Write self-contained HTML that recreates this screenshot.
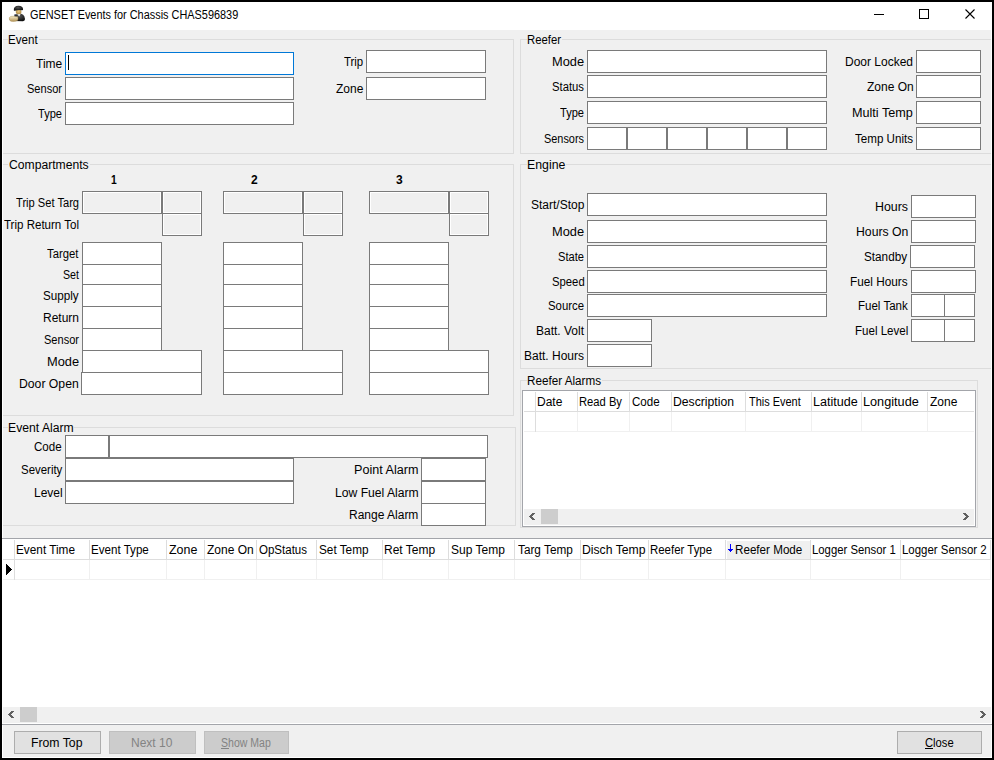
<!DOCTYPE html>
<html><head><meta charset="utf-8"><title>GENSET Events</title><style>
html,body{margin:0;padding:0;width:994px;height:760px;overflow:hidden;background:#000;}
body{position:relative;font-family:"Liberation Sans",sans-serif;font-size:12px;color:#000;}
.r,.tb,.gb,.t,.grid,.btn{position:absolute;box-sizing:border-box;}
.tb{background:#fff;border:1px solid #7a7a7a;}
.tb.focus{border-color:#0078d7;}
.tb.dis{background:#f0f0f0;box-shadow:inset 0 0 0 1px #fff;}
.gb{border:1px solid #dcdcdc;}
.t{line-height:14px;white-space:pre;transform-origin:0 0;}
.grid{background:#fff;border:1px solid #a3a5aa;}
.btn{background:#e1e1e1;border:1px solid #adadad;}
.btn.dis{background:#cccccc;border-color:#bfbfbf;}
</style></head><body>
<div class="r" style="left:0px;top:0px;width:994px;height:760px;background:#000"></div>
<div class="r" style="left:2px;top:2px;width:990px;height:756px;background:#fff"></div>
<div class="r" style="left:3px;top:30px;width:988px;height:727px;background:#f0f0f0"></div>
<svg class="r" style="left:5px;top:3px" width="25" height="22" viewBox="5 3 25 22">
<defs><radialGradient id="bd" cx="0.45" cy="0.3" r="0.7"><stop offset="0" stop-color="#5a5a5a"/><stop offset="1" stop-color="#0e0e0e"/></radialGradient>
<radialGradient id="ht" cx="0.45" cy="0.35" r="0.6"><stop offset="0" stop-color="#555"/><stop offset="1" stop-color="#111"/></radialGradient>
<linearGradient id="tan" x1="0" y1="0" x2="0" y2="1"><stop offset="0" stop-color="#f6ebc8"/><stop offset="1" stop-color="#b39458"/></linearGradient>
<radialGradient id="fc" cx="0.5" cy="0.4" r="0.6"><stop offset="0" stop-color="#e9c77c"/><stop offset="1" stop-color="#a8833e"/></radialGradient></defs>
<path d="M14.2 21 Q14 14.5 18.5 13.6 Q24.5 13.6 25 19 Q25 21 23 21.2 Z" fill="url(#bd)"/>
<ellipse cx="18.6" cy="11.8" rx="2.8" ry="2.6" fill="url(#fc)"/>
<path d="M13.8 10.2 Q13.5 6 18.5 5.8 Q23 5.8 23.1 9.5 Q23 10.6 21.5 10.2 Q18 9.6 15 10.8 Q13.9 11 13.8 10.2 Z" fill="url(#ht)"/>
<path d="M17.2 14.2 L19.2 16.6 L20.6 14 Z" fill="#f4f4f4"/>
<path d="M14.3 14.6 Q16 13.8 17.3 15.2 L16.5 17.2 L14.4 17 Z" fill="#2a2f3a"/>
<path d="M9.3 17.6 Q10 16 14 16.2 L17.8 16.8 Q18.3 19 17.6 20.6 Q15 21.8 11 21.3 Q9 20.8 9.3 17.6 Z" fill="url(#tan)" stroke="#a08040" stroke-width="0.4"/>
</svg>
<div class="t" style="left:30.00px;top:8px;transform:scaleX(0.9083);">GENSET Events for Chassis CHAS596839</div>
<div class="r" style="left:874px;top:14px;width:10px;height:1px;background:#000"></div>
<div class="r" style="left:919px;top:9px;width:10px;height:10px;border:1px solid #000"></div>
<svg class="r" style="left:965px;top:9px" width="10" height="10" viewBox="0 0 10 10"><path d="M0.5 0.5 L9.5 9.5 M9.5 0.5 L0.5 9.5" stroke="#000" stroke-width="1.1"/></svg>
<div class="r" style="left:3px;top:30px;width:988px;height:727px;overflow:hidden"><div class="r" style="left:-3px;top:-30px;width:994px;height:760px">
<div class="gb" style="left:2px;top:39px;width:512px;height:115px"></div>
<div class="r" style="left:8px;top:39px;width:31px;height:1px;background:#f0f0f0"></div>
<div class="t" style="left:8.03px;top:33px;transform:scaleX(0.9667);">Event</div>
<div class="gb" style="left:520px;top:39px;width:481px;height:115px"></div>
<div class="r" style="left:527px;top:39px;width:35px;height:1px;background:#f0f0f0"></div>
<div class="t" style="left:527.06px;top:33px;transform:scaleX(0.9429);">Reefer</div>
<div class="gb" style="left:2px;top:164px;width:512px;height:252px"></div>
<div class="r" style="left:8px;top:164px;width:82px;height:1px;background:#f0f0f0"></div>
<div class="t" style="left:9.00px;top:158px;transform:scaleX(1.0127);">Compartments</div>
<div class="gb" style="left:520px;top:164px;width:481px;height:205px"></div>
<div class="r" style="left:527px;top:164px;width:39px;height:1px;background:#f0f0f0"></div>
<div class="t" style="left:526.97px;top:158px;transform:scaleX(1.0278);">Engine</div>
<div class="gb" style="left:520px;top:380px;width:458px;height:148px"></div>
<div class="r" style="left:527px;top:380px;width:75px;height:1px;background:#f0f0f0"></div>
<div class="t" style="left:527.03px;top:374px;transform:scaleX(0.9733);">Reefer Alarms</div>
<div class="gb" style="left:2px;top:427px;width:514px;height:99px"></div>
<div class="r" style="left:8px;top:427px;width:66px;height:1px;background:#f0f0f0"></div>
<div class="t" style="left:7.98px;top:421px;transform:scaleX(1.0159);">Event Alarm</div>
<div class="tb focus" style="left:65px;top:52px;width:229px;height:23px;"></div>
<div class="r" style="left:68px;top:55px;width:1px;height:15px;background:#000"></div>
<div class="tb" style="left:65px;top:77px;width:229px;height:23px;"></div>
<div class="tb" style="left:65px;top:102px;width:229px;height:23px;"></div>
<div class="t" style="left:36.00px;top:57px;">Time</div>
<div class="t" style="left:27.00px;top:82px;transform:scaleX(0.9211);">Sensor</div>
<div class="t" style="left:38.00px;top:107px;transform:scaleX(0.9231);">Type</div>
<div class="tb" style="left:366px;top:50px;width:120px;height:23px;"></div>
<div class="tb" style="left:366px;top:77px;width:120px;height:23px;"></div>
<div class="t" style="left:344.00px;top:55px;transform:scaleX(0.9500);">Trip</div>
<div class="t" style="left:336.00px;top:82px;">Zone</div>
<div class="tb" style="left:587px;top:50px;width:240px;height:23px;"></div>
<div class="tb" style="left:587px;top:75px;width:240px;height:23px;"></div>
<div class="tb" style="left:587px;top:101px;width:240px;height:23px;"></div>
<div class="tb" style="left:587px;top:127px;width:40px;height:23px;"></div>
<div class="tb" style="left:627px;top:127px;width:40px;height:23px;"></div>
<div class="tb" style="left:667px;top:127px;width:40px;height:23px;"></div>
<div class="tb" style="left:707px;top:127px;width:40px;height:23px;"></div>
<div class="tb" style="left:747px;top:127px;width:40px;height:23px;"></div>
<div class="tb" style="left:787px;top:127px;width:40px;height:23px;"></div>
<div class="t" style="left:551.93px;top:55px;transform:scaleX(1.0690);">Mode</div>
<div class="t" style="left:552.00px;top:80px;transform:scaleX(0.9412);">Status</div>
<div class="t" style="left:560.00px;top:106px;transform:scaleX(0.9231);">Type</div>
<div class="t" style="left:544.00px;top:132px;transform:scaleX(0.9091);">Sensors</div>
<div class="tb" style="left:916px;top:50px;width:65px;height:23px;"></div>
<div class="tb" style="left:916px;top:75px;width:65px;height:23px;"></div>
<div class="tb" style="left:916px;top:101px;width:65px;height:23px;"></div>
<div class="tb" style="left:916px;top:127px;width:65px;height:23px;"></div>
<div class="t" style="left:845.00px;top:55px;">Door Locked</div>
<div class="t" style="left:867.00px;top:80px;">Zone On</div>
<div class="t" style="left:851.95px;top:106px;transform:scaleX(1.0526);">Multi Temp</div>
<div class="t" style="left:855.00px;top:132px;transform:scaleX(0.9667);">Temp Units</div>
<div class="t" style="left:111.00px;top:173px;transform:scaleX(0.8571);font-weight:bold;">1</div>
<div class="tb dis" style="left:82px;top:191px;width:80px;height:23px;"></div>
<div class="tb dis" style="left:162px;top:191px;width:40px;height:23px;"></div>
<div class="tb dis" style="left:162px;top:213px;width:40px;height:23px;"></div>
<div class="tb" style="left:82px;top:242px;width:80px;height:23px;"></div>
<div class="tb" style="left:82px;top:264px;width:80px;height:23px;"></div>
<div class="tb" style="left:82px;top:284px;width:80px;height:23px;"></div>
<div class="tb" style="left:82px;top:306px;width:80px;height:23px;"></div>
<div class="tb" style="left:82px;top:328px;width:80px;height:23px;"></div>
<div class="tb" style="left:82px;top:350px;width:120px;height:23px;"></div>
<div class="tb" style="left:81px;top:372px;width:121px;height:23px;"></div>
<div class="t" style="left:251.00px;top:173px;font-weight:bold;">2</div>
<div class="tb dis" style="left:223px;top:191px;width:80px;height:23px;"></div>
<div class="tb dis" style="left:303px;top:191px;width:40px;height:23px;"></div>
<div class="tb dis" style="left:303px;top:213px;width:40px;height:23px;"></div>
<div class="tb" style="left:223px;top:242px;width:80px;height:23px;"></div>
<div class="tb" style="left:223px;top:264px;width:80px;height:23px;"></div>
<div class="tb" style="left:223px;top:284px;width:80px;height:23px;"></div>
<div class="tb" style="left:223px;top:306px;width:80px;height:23px;"></div>
<div class="tb" style="left:223px;top:328px;width:80px;height:23px;"></div>
<div class="tb" style="left:223px;top:350px;width:120px;height:23px;"></div>
<div class="tb" style="left:223px;top:372px;width:120px;height:23px;"></div>
<div class="t" style="left:396.00px;top:173px;font-weight:bold;">3</div>
<div class="tb dis" style="left:369px;top:191px;width:80px;height:23px;"></div>
<div class="tb dis" style="left:449px;top:191px;width:40px;height:23px;"></div>
<div class="tb dis" style="left:449px;top:213px;width:40px;height:23px;"></div>
<div class="tb" style="left:369px;top:242px;width:80px;height:23px;"></div>
<div class="tb" style="left:369px;top:264px;width:80px;height:23px;"></div>
<div class="tb" style="left:369px;top:284px;width:80px;height:23px;"></div>
<div class="tb" style="left:369px;top:306px;width:80px;height:23px;"></div>
<div class="tb" style="left:369px;top:328px;width:80px;height:23px;"></div>
<div class="tb" style="left:369px;top:350px;width:120px;height:23px;"></div>
<div class="tb" style="left:369px;top:372px;width:120px;height:23px;"></div>
<div class="t" style="left:16.00px;top:196px;transform:scaleX(0.9265);">Trip Set Targ</div>
<div class="t" style="left:4.00px;top:218px;transform:scaleX(0.9615);">Trip Return Tol</div>
<div class="t" style="left:47.00px;top:247px;transform:scaleX(0.9412);">Target</div>
<div class="t" style="left:63.00px;top:268px;transform:scaleX(0.8889);">Set</div>
<div class="t" style="left:43.00px;top:289px;transform:scaleX(0.9730);">Supply</div>
<div class="t" style="left:43.00px;top:311px;">Return</div>
<div class="t" style="left:44.00px;top:333px;transform:scaleX(0.9211);">Sensor</div>
<div class="t" style="left:46.93px;top:355px;transform:scaleX(1.0690);">Mode</div>
<div class="t" style="left:18.98px;top:377px;transform:scaleX(1.0175);">Door Open</div>
<div class="tb" style="left:587px;top:193px;width:240px;height:23px;"></div>
<div class="tb" style="left:587px;top:220px;width:240px;height:23px;"></div>
<div class="tb" style="left:587px;top:245px;width:240px;height:23px;"></div>
<div class="tb" style="left:587px;top:270px;width:240px;height:23px;"></div>
<div class="tb" style="left:587px;top:294px;width:240px;height:23px;"></div>
<div class="tb" style="left:587px;top:319px;width:65px;height:23px;"></div>
<div class="tb" style="left:587px;top:344px;width:65px;height:23px;"></div>
<div class="t" style="left:531.00px;top:198px;">Start/Stop</div>
<div class="t" style="left:551.93px;top:225px;transform:scaleX(1.0690);">Mode</div>
<div class="t" style="left:558.00px;top:250px;transform:scaleX(0.9286);">State</div>
<div class="t" style="left:552.00px;top:275px;transform:scaleX(0.9412);">Speed</div>
<div class="t" style="left:548.00px;top:299px;transform:scaleX(0.9474);">Source</div>
<div class="t" style="left:536.00px;top:324px;">Batt. Volt</div>
<div class="t" style="left:524.00px;top:349px;">Batt. Hours</div>
<div class="tb" style="left:911px;top:195px;width:65px;height:23px;"></div>
<div class="tb" style="left:911px;top:220px;width:65px;height:23px;"></div>
<div class="tb" style="left:910px;top:245px;width:65px;height:23px;"></div>
<div class="tb" style="left:911px;top:270px;width:65px;height:23px;"></div>
<div class="tb" style="left:911px;top:294px;width:34px;height:23px;"></div>
<div class="tb" style="left:944px;top:294px;width:31px;height:23px;"></div>
<div class="tb" style="left:911px;top:319px;width:34px;height:23px;"></div>
<div class="tb" style="left:944px;top:319px;width:31px;height:23px;"></div>
<div class="t" style="left:874.97px;top:200px;transform:scaleX(1.0323);">Hours</div>
<div class="t" style="left:855.98px;top:225px;transform:scaleX(1.0200);">Hours On</div>
<div class="t" style="left:864.00px;top:250px;transform:scaleX(0.9773);">Standby</div>
<div class="t" style="left:850.02px;top:275px;transform:scaleX(0.9828);">Fuel Hours</div>
<div class="t" style="left:858.04px;top:299px;transform:scaleX(0.9608);">Fuel Tank</div>
<div class="t" style="left:855.04px;top:324px;transform:scaleX(0.9630);">Fuel Level</div>
<div class="grid" style="left:522px;top:390px;width:454px;height:137px"></div>
<div class="r" style="left:524px;top:411px;width:450px;height:1px;background:#dddddd"></div>
<div class="r" style="left:524px;top:431px;width:450px;height:1px;background:#f0f0f0"></div>
<div class="r" style="left:535px;top:392px;width:1px;height:19px;background:#dddddd"></div>
<div class="r" style="left:535px;top:412px;width:1px;height:19px;background:#f0f0f0"></div>
<div class="r" style="left:577px;top:392px;width:1px;height:19px;background:#dddddd"></div>
<div class="r" style="left:577px;top:412px;width:1px;height:19px;background:#f0f0f0"></div>
<div class="r" style="left:629px;top:392px;width:1px;height:19px;background:#dddddd"></div>
<div class="r" style="left:629px;top:412px;width:1px;height:19px;background:#f0f0f0"></div>
<div class="r" style="left:671px;top:392px;width:1px;height:19px;background:#dddddd"></div>
<div class="r" style="left:671px;top:412px;width:1px;height:19px;background:#f0f0f0"></div>
<div class="r" style="left:745px;top:392px;width:1px;height:19px;background:#dddddd"></div>
<div class="r" style="left:745px;top:412px;width:1px;height:19px;background:#f0f0f0"></div>
<div class="r" style="left:811px;top:392px;width:1px;height:19px;background:#dddddd"></div>
<div class="r" style="left:811px;top:412px;width:1px;height:19px;background:#f0f0f0"></div>
<div class="r" style="left:861px;top:392px;width:1px;height:19px;background:#dddddd"></div>
<div class="r" style="left:861px;top:412px;width:1px;height:19px;background:#f0f0f0"></div>
<div class="r" style="left:927px;top:392px;width:1px;height:19px;background:#dddddd"></div>
<div class="r" style="left:927px;top:412px;width:1px;height:19px;background:#f0f0f0"></div>
<div class="r" style="left:535px;top:412px;width:1px;height:20px;background:#dddddd"></div>
<div class="t" style="left:537.00px;top:395px;">Date</div>
<div class="t" style="left:579.07px;top:395px;transform:scaleX(0.9333);">Read By</div>
<div class="t" style="left:632.00px;top:395px;transform:scaleX(0.9655);">Code</div>
<div class="t" style="left:672.98px;top:395px;transform:scaleX(1.0169);">Description</div>
<div class="t" style="left:749.00px;top:395px;transform:scaleX(0.9123);">This Event</div>
<div class="t" style="left:812.95px;top:395px;transform:scaleX(1.0476);">Latitude</div>
<div class="t" style="left:862.94px;top:395px;transform:scaleX(1.0577);">Longitude</div>
<div class="t" style="left:930.00px;top:395px;">Zone</div>
<div class="r" style="left:524px;top:509px;width:450px;height:16px;background:#f0f0f0"></div>
<div class="r" style="left:532px;top:513px;width:3px;height:1px;background:#606060"></div>
<div class="r" style="left:531px;top:514px;width:3px;height:1px;background:#606060"></div>
<div class="r" style="left:530px;top:515px;width:3px;height:1px;background:#606060"></div>
<div class="r" style="left:529px;top:516px;width:3px;height:1px;background:#606060"></div>
<div class="r" style="left:530px;top:517px;width:3px;height:1px;background:#606060"></div>
<div class="r" style="left:531px;top:518px;width:3px;height:1px;background:#606060"></div>
<div class="r" style="left:532px;top:519px;width:3px;height:1px;background:#606060"></div>
<div class="r" style="left:541px;top:509px;width:17px;height:15px;background:#cdcdcd"></div>
<div class="r" style="left:963px;top:513px;width:3px;height:1px;background:#606060"></div>
<div class="r" style="left:964px;top:514px;width:3px;height:1px;background:#606060"></div>
<div class="r" style="left:965px;top:515px;width:3px;height:1px;background:#606060"></div>
<div class="r" style="left:966px;top:516px;width:3px;height:1px;background:#606060"></div>
<div class="r" style="left:965px;top:517px;width:3px;height:1px;background:#606060"></div>
<div class="r" style="left:964px;top:518px;width:3px;height:1px;background:#606060"></div>
<div class="r" style="left:963px;top:519px;width:3px;height:1px;background:#606060"></div>
<div class="tb" style="left:65px;top:435px;width:44px;height:23px;"></div>
<div class="tb" style="left:109px;top:435px;width:379px;height:23px;"></div>
<div class="tb" style="left:65px;top:458px;width:229px;height:23px;"></div>
<div class="tb" style="left:65px;top:481px;width:229px;height:23px;"></div>
<div class="t" style="left:34.00px;top:440px;transform:scaleX(0.9655);">Code</div>
<div class="t" style="left:21.00px;top:463px;transform:scaleX(0.9535);">Severity</div>
<div class="t" style="left:34.00px;top:486px;">Level</div>
<div class="tb" style="left:421px;top:458px;width:65px;height:23px;"></div>
<div class="tb" style="left:421px;top:481px;width:65px;height:23px;"></div>
<div class="tb" style="left:421px;top:503px;width:65px;height:23px;"></div>
<div class="t" style="left:353.95px;top:463px;transform:scaleX(1.0500);">Point Alarm</div>
<div class="t" style="left:334.99px;top:486px;transform:scaleX(1.0123);">Low Fuel Alarm</div>
<div class="t" style="left:349.00px;top:508px;">Range Alarm</div>
<div class="r" style="left:3px;top:539px;width:988px;height:185px;background:#ffffff"></div>
<div class="r" style="left:3px;top:559px;width:988px;height:1px;background:#dddddd"></div>
<div class="r" style="left:3px;top:579px;width:988px;height:1px;background:#f0f0f0"></div>
<div class="r" style="left:727px;top:541px;width:83px;height:18px;background:#f0f0f0"></div>
<div class="r" style="left:14px;top:540px;width:1px;height:19px;background:#dddddd"></div>
<div class="r" style="left:14px;top:560px;width:1px;height:19px;background:#f0f0f0"></div>
<div class="r" style="left:89px;top:540px;width:1px;height:19px;background:#dddddd"></div>
<div class="r" style="left:89px;top:560px;width:1px;height:19px;background:#f0f0f0"></div>
<div class="r" style="left:166px;top:540px;width:1px;height:19px;background:#dddddd"></div>
<div class="r" style="left:166px;top:560px;width:1px;height:19px;background:#f0f0f0"></div>
<div class="r" style="left:204px;top:540px;width:1px;height:19px;background:#dddddd"></div>
<div class="r" style="left:204px;top:560px;width:1px;height:19px;background:#f0f0f0"></div>
<div class="r" style="left:256px;top:540px;width:1px;height:19px;background:#dddddd"></div>
<div class="r" style="left:256px;top:560px;width:1px;height:19px;background:#f0f0f0"></div>
<div class="r" style="left:316px;top:540px;width:1px;height:19px;background:#dddddd"></div>
<div class="r" style="left:316px;top:560px;width:1px;height:19px;background:#f0f0f0"></div>
<div class="r" style="left:382px;top:540px;width:1px;height:19px;background:#dddddd"></div>
<div class="r" style="left:382px;top:560px;width:1px;height:19px;background:#f0f0f0"></div>
<div class="r" style="left:448px;top:540px;width:1px;height:19px;background:#dddddd"></div>
<div class="r" style="left:448px;top:560px;width:1px;height:19px;background:#f0f0f0"></div>
<div class="r" style="left:514px;top:540px;width:1px;height:19px;background:#dddddd"></div>
<div class="r" style="left:514px;top:560px;width:1px;height:19px;background:#f0f0f0"></div>
<div class="r" style="left:580px;top:540px;width:1px;height:19px;background:#dddddd"></div>
<div class="r" style="left:580px;top:560px;width:1px;height:19px;background:#f0f0f0"></div>
<div class="r" style="left:648px;top:540px;width:1px;height:19px;background:#dddddd"></div>
<div class="r" style="left:648px;top:560px;width:1px;height:19px;background:#f0f0f0"></div>
<div class="r" style="left:725px;top:540px;width:1px;height:19px;background:#dddddd"></div>
<div class="r" style="left:725px;top:560px;width:1px;height:19px;background:#f0f0f0"></div>
<div class="r" style="left:810px;top:540px;width:1px;height:19px;background:#dddddd"></div>
<div class="r" style="left:810px;top:560px;width:1px;height:19px;background:#f0f0f0"></div>
<div class="r" style="left:900px;top:540px;width:1px;height:19px;background:#dddddd"></div>
<div class="r" style="left:900px;top:560px;width:1px;height:19px;background:#f0f0f0"></div>
<div class="r" style="left:990px;top:540px;width:1px;height:19px;background:#dddddd"></div>
<div class="r" style="left:990px;top:560px;width:1px;height:19px;background:#f0f0f0"></div>
<div class="r" style="left:14px;top:560px;width:1px;height:20px;background:#dddddd"></div>
<div class="t" style="left:16.02px;top:543px;transform:scaleX(0.9831);">Event Time</div>
<div class="t" style="left:91.03px;top:543px;transform:scaleX(0.9661);">Event Type</div>
<div class="t" style="left:169.00px;top:543px;transform:scaleX(1.0370);">Zone</div>
<div class="t" style="left:207.00px;top:543px;">Zone On</div>
<div class="t" style="left:259.00px;top:543px;transform:scaleX(0.9600);">OpStatus</div>
<div class="t" style="left:319.00px;top:543px;transform:scaleX(0.9800);">Set Temp</div>
<div class="t" style="left:384.00px;top:543px;">Ret Temp</div>
<div class="t" style="left:451.00px;top:543px;">Sup Temp</div>
<div class="t" style="left:518.00px;top:543px;transform:scaleX(0.9821);">Targ Temp</div>
<div class="t" style="left:581.98px;top:543px;transform:scaleX(1.0164);">Disch Temp</div>
<div class="t" style="left:650.05px;top:543px;transform:scaleX(0.9531);">Reefer Type</div>
<div class="t" style="left:735.03px;top:543px;transform:scaleX(0.9706);">Reefer Mode</div>
<div class="t" style="left:812.06px;top:543px;transform:scaleX(0.9432);">Logger Sensor 1</div>
<div class="t" style="left:902.05px;top:543px;transform:scaleX(0.9540);">Logger Sensor 2</div>
<div class="r" style="left:6px;top:564px;width:1px;height:11px;background:#000"></div>
<div class="r" style="left:7px;top:565px;width:1px;height:9px;background:#000"></div>
<div class="r" style="left:8px;top:566px;width:1px;height:7px;background:#000"></div>
<div class="r" style="left:9px;top:567px;width:1px;height:5px;background:#000"></div>
<div class="r" style="left:10px;top:568px;width:1px;height:3px;background:#000"></div>
<div class="r" style="left:11px;top:569px;width:1px;height:1px;background:#000"></div>
<div class="r" style="left:730px;top:544px;width:1px;height:8px;background:#0000ff"></div>
<div class="r" style="left:728px;top:549px;width:5px;height:1px;background:#0000ff"></div>
<div class="r" style="left:729px;top:550px;width:3px;height:1px;background:#0000ff"></div>
<div class="r" style="left:3px;top:707px;width:988px;height:16px;background:#f0f0f0"></div>
<div class="r" style="left:11px;top:711px;width:3px;height:1px;background:#606060"></div>
<div class="r" style="left:10px;top:712px;width:3px;height:1px;background:#606060"></div>
<div class="r" style="left:9px;top:713px;width:3px;height:1px;background:#606060"></div>
<div class="r" style="left:8px;top:714px;width:3px;height:1px;background:#606060"></div>
<div class="r" style="left:9px;top:715px;width:3px;height:1px;background:#606060"></div>
<div class="r" style="left:10px;top:716px;width:3px;height:1px;background:#606060"></div>
<div class="r" style="left:11px;top:717px;width:3px;height:1px;background:#606060"></div>
<div class="r" style="left:20px;top:707px;width:17px;height:15px;background:#cdcdcd"></div>
<div class="r" style="left:980px;top:711px;width:3px;height:1px;background:#606060"></div>
<div class="r" style="left:981px;top:712px;width:3px;height:1px;background:#606060"></div>
<div class="r" style="left:982px;top:713px;width:3px;height:1px;background:#606060"></div>
<div class="r" style="left:983px;top:714px;width:3px;height:1px;background:#606060"></div>
<div class="r" style="left:982px;top:715px;width:3px;height:1px;background:#606060"></div>
<div class="r" style="left:981px;top:716px;width:3px;height:1px;background:#606060"></div>
<div class="r" style="left:980px;top:717px;width:3px;height:1px;background:#606060"></div>
<div class="btn" style="left:14px;top:731px;width:87px;height:23px"></div>
<div class="t" style="left:30.98px;top:736px;transform:scaleX(1.0204);">From Top</div>
<div class="btn dis" style="left:109px;top:731px;width:87px;height:23px"></div>
<div class="t" style="left:131.00px;top:736px;color:#838383;">Next 10</div>
<div class="btn dis" style="left:204px;top:731px;width:85px;height:23px"></div>
<div class="t" style="left:221.00px;top:736px;transform:scaleX(0.8772);color:#838383;">Show Map</div>
<div class="r" style="left:221px;top:748px;width:8px;height:1px;background:#838383"></div>
<div class="btn" style="left:897px;top:731px;width:85px;height:23px"></div>
<div class="t" style="left:925.00px;top:736px;transform:scaleX(0.9355);">Close</div>
<div class="r" style="left:925px;top:748px;width:8px;height:1px;background:#000"></div>
</div></div>
<div class="r" style="left:2px;top:538px;width:990px;height:1px;background:#a3a5aa"></div>
<div class="r" style="left:2px;top:724px;width:990px;height:1px;background:#a3a5aa"></div>
</body></html>
